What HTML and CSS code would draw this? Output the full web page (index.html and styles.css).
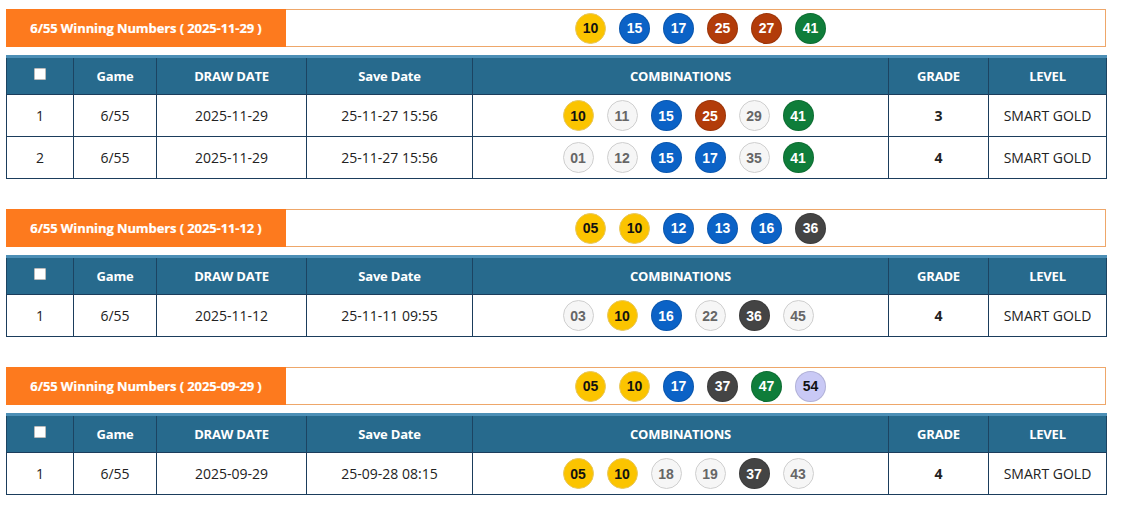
FILE: index.html
```html
<!DOCTYPE html>
<html>
<head>
<meta charset="utf-8">
<link rel="stylesheet" href="styles.css">
</head>
<body>
<div class="page">

  <section class="block">
    <div class="win-bar">
      <div class="win-label">6/55 Winning Numbers ( 2025-11-29 )</div>
      <div class="win-balls">
        <span class="ball y">10</span><span class="ball b">15</span><span class="ball b">17</span><span class="ball r">25</span><span class="ball r">27</span><span class="ball g">41</span>
      </div>
    </div>
    <table class="res">
      <colgroup><col class="c1"><col class="c2"><col class="c3"><col class="c4"><col class="c5"><col class="c6"><col class="c7"></colgroup>
      <thead><tr><th><span class="chk"></span></th><th>Game</th><th>DRAW DATE</th><th>Save Date</th><th>COMBINATIONS</th><th>GRADE</th><th>LEVEL</th></tr></thead>
      <tbody>
        <tr><td>1</td><td>6/55</td><td>2025-11-29</td><td>25-11-27 15:56</td><td><div class="combo"><span class="ball y">10</span><span class="ball w">11</span><span class="ball b">15</span><span class="ball r">25</span><span class="ball w">29</span><span class="ball g">41</span></div></td><td class="grade">3</td><td>SMART GOLD</td></tr>
        <tr><td>2</td><td>6/55</td><td>2025-11-29</td><td>25-11-27 15:56</td><td><div class="combo"><span class="ball w">01</span><span class="ball w">12</span><span class="ball b">15</span><span class="ball b">17</span><span class="ball w">35</span><span class="ball g">41</span></div></td><td class="grade">4</td><td>SMART GOLD</td></tr>
      </tbody>
    </table>
  </section>

  <section class="block">
    <div class="win-bar">
      <div class="win-label">6/55 Winning Numbers ( 2025-11-12 )</div>
      <div class="win-balls">
        <span class="ball y">05</span><span class="ball y">10</span><span class="ball b">12</span><span class="ball b">13</span><span class="ball b">16</span><span class="ball k">36</span>
      </div>
    </div>
    <table class="res">
      <colgroup><col class="c1"><col class="c2"><col class="c3"><col class="c4"><col class="c5"><col class="c6"><col class="c7"></colgroup>
      <thead><tr><th><span class="chk"></span></th><th>Game</th><th>DRAW DATE</th><th>Save Date</th><th>COMBINATIONS</th><th>GRADE</th><th>LEVEL</th></tr></thead>
      <tbody>
        <tr><td>1</td><td>6/55</td><td>2025-11-12</td><td>25-11-11 09:55</td><td><div class="combo"><span class="ball w">03</span><span class="ball y">10</span><span class="ball b">16</span><span class="ball w">22</span><span class="ball k">36</span><span class="ball w">45</span></div></td><td class="grade">4</td><td>SMART GOLD</td></tr>
      </tbody>
    </table>
  </section>

  <section class="block">
    <div class="win-bar">
      <div class="win-label">6/55 Winning Numbers ( 2025-09-29 )</div>
      <div class="win-balls">
        <span class="ball y">05</span><span class="ball y">10</span><span class="ball b">17</span><span class="ball k">37</span><span class="ball g">47</span><span class="ball p">54</span>
      </div>
    </div>
    <table class="res">
      <colgroup><col class="c1"><col class="c2"><col class="c3"><col class="c4"><col class="c5"><col class="c6"><col class="c7"></colgroup>
      <thead><tr><th><span class="chk"></span></th><th>Game</th><th>DRAW DATE</th><th>Save Date</th><th>COMBINATIONS</th><th>GRADE</th><th>LEVEL</th></tr></thead>
      <tbody>
        <tr><td>1</td><td>6/55</td><td>2025-09-29</td><td>25-09-28 08:15</td><td><div class="combo"><span class="ball y">05</span><span class="ball y">10</span><span class="ball w">18</span><span class="ball w">19</span><span class="ball k">37</span><span class="ball w">43</span></div></td><td class="grade">4</td><td>SMART GOLD</td></tr>
      </tbody>
    </table>
  </section>

</div>
</body>
</html>
```

FILE: styles.css
```css
* { box-sizing: border-box; }
html, body { margin: 0; padding: 0; background: #fff; }
body { font-family: "Open Sans", "Noto Sans", sans-serif; color: #222; }

.page {
  width: 1100px;
  margin-left: 6px;
  padding-top: 9px;
  display: flex;
  flex-direction: column;
  gap: 30px;
}

.block { display: flex; flex-direction: column; gap: 9px; }

.win-bar {
  display: flex;
  height: 38px;
  border: 1px solid #eea76a;
  background: #fff;
}
.win-label {
  width: 280px;
  margin: -1px 0 -1px -1px;
  background: #fd7a1e;
  color: #fff;
  font-weight: 700;
  font-size: 13px;
  display: flex;
  align-items: center;
  justify-content: center;
  letter-spacing: -0.1px;
  -webkit-text-stroke: 0.2px #fff;
}
.win-balls {
  flex: 1;
  display: flex;
  align-items: center;
  justify-content: center;
  gap: 13px;
  padding-left: 10px;
}

.ball {
  width: 31px;
  height: 31px;
  border-radius: 50%;
  display: inline-flex;
  align-items: center;
  justify-content: center;
  font-family: "Liberation Sans", Arial, sans-serif;
  font-weight: 700;
  font-size: 14px;
  border: 1px solid rgba(0,0,0,0.12);
  color: #fff;
}
.ball.y { background: #fbc400; color: #111; border-color: #e8c860; }
.ball.b { background: #0b62c6; }
.ball.r { background: #b23c0a; }
.ball.g { background: #0f7d3a; }
.ball.k { background: #444444; }
.ball.p { background: #c9c9f5; color: #111; }
.ball.w { background: #f6f6f6; color: #666; border-color: #cfcfcf; }

.res {
  width: 1100px;
  border-collapse: collapse;
  table-layout: fixed;
  margin-top: -1px;
}
.res col.c1 { width: 67px; }
.res col.c2 { width: 83px; }
.res col.c3 { width: 150px; }
.res col.c4 { width: 166px; }
.res col.c5 { width: 416px; }
.res col.c6 { width: 100px; }
.res col.c7 { width: 118px; }

.res th {
  background: #276a8d;
  color: #fff;
  font-size: 13px;
  font-weight: 700;
  height: 38px;
  padding: 0;
  border-left: 1px solid #1c4462;
  border-right: 1px solid #1c4462;
  border-top: 3px solid #4c8fb6;
  border-bottom: 1px solid #1b3d5c;
  text-align: center;
  vertical-align: middle;
  letter-spacing: -0.2px;
}
.res td {
  height: 42px;
  border: 1px solid #1b3d5c;
  text-align: center;
  vertical-align: middle;
  font-size: 14px;
  padding: 0;
  color: #222;
}
.res td.grade { font-weight: 700; }

.chk {
  display: inline-block;
  width: 12px;
  height: 12px;
  background: #fff;
  border: 1px solid #bbb;
  border-radius: 1px;
  vertical-align: middle;
  margin-top: -8px;
}

.combo {
  display: flex;
  justify-content: center;
  gap: 13px;
  padding-left: 15px;
}
```
